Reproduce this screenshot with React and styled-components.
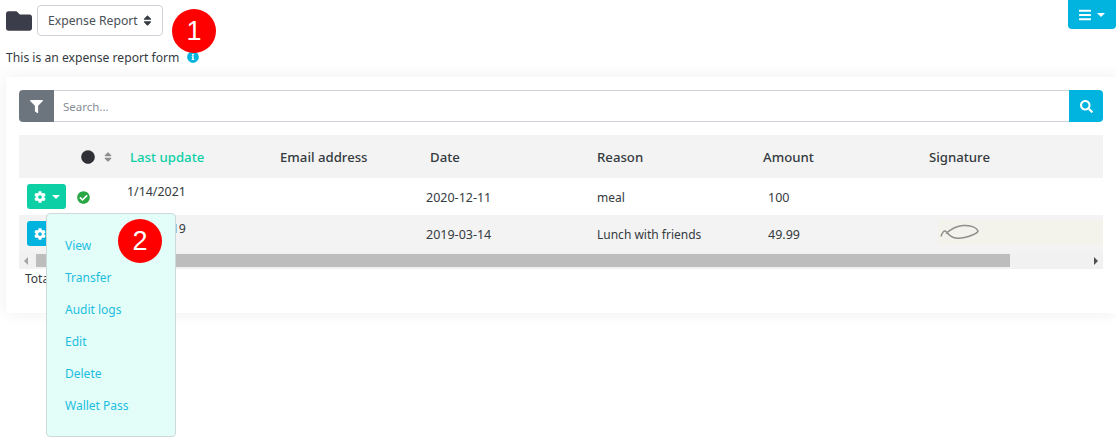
import styled, { createGlobalStyle } from "styled-components";
import { FaBars, FaCheckCircle, FaCircle, FaCog, FaFilter, FaFolder, FaInfoCircle, FaSearch, FaSort } from "react-icons/fa";

const colors = {
  teal: "#0ccfa6",
  blue: "#00b4df",
  link: "#1dbde0",
  text: "#343a40",
  line: "#ced4da",
};

const headerColumns = "62px 49px 150px 150px 167px 166px 166px 1fr";
const rowColumns = "58px 50px 153px 146px 171px 171px 170px 1fr";

const GlobalStyle = createGlobalStyle`
  html, body {
    margin: 0;
    background: #ffffff;
  }
  body {
    font-family: "Noto Sans", "Open Sans", sans-serif;
    font-size: 12px;
    color: ${colors.text};
  }
`;

const Page = styled.div`
  position: relative;
  width: 1116px;
  height: 444px;
  padding: 5px 0 0 6px;
  box-sizing: border-box;
  overflow: hidden;
`;

const TopBar = styled.div`
  display: flex;
  align-items: center;
  gap: 5px;
  height: 31px;
`;

const FolderIcon = styled(FaFolder)`
  width: 26px;
  height: 26px;
  color: #3c3d4a;
`;

const SelectButton = styled.button`
  display: flex;
  align-items: center;
  justify-content: space-between;
  width: 126px;
  height: 31px;
  padding: 0 10px;
  box-sizing: border-box;
  background: #ffffff;
  border: 1px solid ${colors.line};
  border-radius: 4px;
  font: inherit;
  font-size: 12.2px;
  color: #495057;
  svg {
    width: 9px;
    height: 13px;
    color: #343a40;
  }
`;

const Description = styled.p`
  display: flex;
  align-items: center;
  gap: 8px;
  height: 18px;
  margin: 12px 0 0;
  font-size: 12.15px;
  svg {
    width: 12px;
    height: 12px;
    color: ${colors.blue};
  }
`;

const MenuButton = styled.button`
  position: absolute;
  top: 0;
  right: 0;
  display: flex;
  align-items: center;
  justify-content: center;
  gap: 6px;
  width: 48px;
  height: 29px;
  padding: 0;
  border: 0;
  border-radius: 0 0 4px 4px;
  background: ${colors.blue};
  color: #ffffff;
  svg {
    width: 12px;
    height: 14px;
  }
`;

const Caret = styled.span`
  width: 0;
  height: 0;
  border-left: 4px solid transparent;
  border-right: 4px solid transparent;
  border-top: 4px solid #ffffff;
`;

const Card = styled.section`
  margin-top: 11px;
  height: 236px;
  padding: 13px 13px 0;
  box-sizing: border-box;
  background: #ffffff;
  box-shadow: 0 0 16px rgba(0, 0, 0, 0.07);
`;

const SearchRow = styled.div`
  display: flex;
  height: 32px;
  margin-bottom: 13px;
`;

const FilterAddon = styled.div`
  display: flex;
  align-items: center;
  justify-content: center;
  width: 35px;
  background: #6c757d;
  border-radius: 4px 0 0 4px;
  color: #ffffff;
  svg {
    width: 13px;
    height: 13px;
  }
`;

const SearchInput = styled.input`
  flex: 1;
  min-width: 0;
  height: 32px;
  padding: 0 9px;
  box-sizing: border-box;
  border: 1px solid ${colors.line};
  border-left: 0;
  border-right: 0;
  font: inherit;
  font-size: 11.5px;
  outline: none;
  &::placeholder {
    color: #868e96;
    opacity: 1;
  }
`;

const SearchButton = styled.button`
  display: flex;
  align-items: center;
  justify-content: center;
  width: 34px;
  padding: 0;
  border: 0;
  border-radius: 0 4px 4px 0;
  background: ${colors.blue};
  color: #ffffff;
  svg {
    width: 13px;
    height: 13px;
  }
`;

const HeaderRow = styled.div`
  display: grid;
  grid-template-columns: ${headerColumns};
  align-items: center;
  height: 43px;
  padding-top: 1px;
  box-sizing: border-box;
  background: #f3f3f3;
  font-size: 13.2px;
  font-weight: 500;
  color: #343a40;
`;

const HeaderCell = styled.span`
  color: ${({ $active }) => ($active ? colors.teal : "inherit")};
`;

const StatusHead = styled.span`
  display: flex;
  align-items: center;
  gap: 9px;
  svg:first-child {
    width: 14px;
    height: 14px;
    color: #2f3036;
  }
  svg:last-child {
    width: 8px;
    height: 12px;
    color: #8d8d8d;
  }
`;

const Row = styled.div`
  display: grid;
  grid-template-columns: ${rowColumns};
  height: 37px;
  background: ${({ $striped }) => ($striped ? "#f3f3f3" : "#ffffff")};
`;

const ActionCell = styled.div`
  display: flex;
  align-items: center;
  padding-left: 8px;
`;

const ActionButton = styled.button`
  display: flex;
  align-items: center;
  gap: 6px;
  width: 39px;
  height: 25px;
  padding: 0 0 0 7px;
  box-sizing: border-box;
  border: 0;
  border-radius: 3px;
  background: ${({ $tone }) => ($tone === "teal" ? colors.teal : colors.blue)};
  color: #ffffff;
  svg {
    width: 12px;
    height: 12px;
  }
`;

const StatusCell = styled.div`
  display: flex;
  align-items: center;
  padding-top: 2px;
  svg {
    width: 13px;
    height: 13px;
    color: #28a745;
  }
`;

const UpdatedCell = styled.div`
  padding-top: 5px;
  font-size: 12.4px;
  line-height: 18px;
`;

const Cell = styled.div`
  display: flex;
  align-items: center;
  padding-top: 1px;
  font-size: ${({ $numeric }) => ($numeric ? "12.5px" : "12px")};
`;

const SignatureCell = styled.div`
  display: flex;
  align-items: center;
  height: 25px;
  margin-top: 5px;
  background: #f3f3ec;
  svg {
    width: 42px;
    height: 20px;
  }
`;

const ScrollBar = styled.div`
  display: flex;
  align-items: center;
  height: 17px;
  background: #f1f1f1;
`;

const ScrollArrow = styled.span`
  width: 0;
  height: 0;
  margin: 0 5px;
  border-top: 4px solid transparent;
  border-bottom: 4px solid transparent;
  border-left: ${({ $right }) => ($right ? "4px solid #505050" : "0")};
  border-right: ${({ $right }) => ($right ? "0" : "4px solid #a3a3a3")};
`;

const ScrollThumb = styled.div`
  width: 974px;
  height: 13px;
  margin-left: 3px;
  background: #bdbdbd;
`;

const ScrollSpace = styled.div`
  flex: 1;
`;

const Total = styled.div`
  padding: 0 0 0 6px;
  margin-top: 1px;
  line-height: 18px;
`;

const Dropdown = styled.ul`
  position: absolute;
  left: 46px;
  top: 213px;
  width: 130px;
  height: 224px;
  margin: 0;
  padding: 16px 0 0;
  box-sizing: border-box;
  list-style: none;
  background: #e3fdf9;
  border: 1px solid #ced9d8;
  border-radius: 4px;
`;

const DropdownItem = styled.li`
  height: 32px;
  padding-left: 18px;
  line-height: 32px;
  color: ${colors.link};
`;

const Marker = styled.span`
  position: absolute;
  left: ${({ $x }) => $x}px;
  top: ${({ $y }) => $y}px;
  display: flex;
  align-items: center;
  justify-content: center;
  width: 44px;
  height: 44px;
  border-radius: 50%;
  background: #fe0000;
  color: #ffffff;
  font-family: "Liberation Sans", Arial, sans-serif;
  font-size: 27px;
`;

const menuItems = ["View", "Transfer", "Audit logs", "Edit", "Delete", "Wallet Pass"];

function RowActions({ tone }) {
  return (
    <ActionCell>
      <ActionButton $tone={tone}>
        <FaCog />
        <Caret />
      </ActionButton>
    </ActionCell>
  );
}

function App() {
  return (
    <Page>
      <GlobalStyle />
      <TopBar>
        <FolderIcon />
        <SelectButton>
          Expense Report
          <FaSort />
        </SelectButton>
      </TopBar>
      <Description>
        This is an expense report form
        <FaInfoCircle />
      </Description>
      <MenuButton>
        <FaBars />
        <Caret />
      </MenuButton>

      <Card>
        <SearchRow>
          <FilterAddon>
            <FaFilter />
          </FilterAddon>
          <SearchInput placeholder="Search..." />
          <SearchButton>
            <FaSearch />
          </SearchButton>
        </SearchRow>

        <HeaderRow>
          <span />
          <StatusHead>
            <FaCircle />
            <FaSort />
          </StatusHead>
          <HeaderCell $active>Last update</HeaderCell>
          <HeaderCell>Email address</HeaderCell>
          <HeaderCell>Date</HeaderCell>
          <HeaderCell>Reason</HeaderCell>
          <HeaderCell>Amount</HeaderCell>
          <HeaderCell>Signature</HeaderCell>
        </HeaderRow>

        <Row>
          <RowActions tone="teal" />
          <StatusCell>
            <FaCheckCircle />
          </StatusCell>
          <UpdatedCell>1/14/2021</UpdatedCell>
          <Cell />
          <Cell $numeric>2020-12-11</Cell>
          <Cell>meal</Cell>
          <Cell $numeric>100</Cell>
          <Cell />
        </Row>
        <Row $striped>
          <RowActions tone="blue" />
          <StatusCell />
          <UpdatedCell>3/14/2019</UpdatedCell>
          <Cell />
          <Cell $numeric>2019-03-14</Cell>
          <Cell>Lunch with friends</Cell>
          <Cell $numeric>49.99</Cell>
          <SignatureCell>
            <svg viewBox="0 0 42 20" fill="none">
              <path
                d="M3 13.5C4 10 6 7 8 8.5C10 11 13 14.5 18 15C25 16 37 12 40 8.5C39 4 31 2 25 2.5C18 3 12 7 8 10.5"
                stroke="#8f8f89"
                strokeWidth="1.5"
              />
            </svg>
          </SignatureCell>
        </Row>

        <ScrollBar>
          <ScrollArrow />
          <ScrollThumb />
          <ScrollSpace />
          <ScrollArrow $right />
        </ScrollBar>
        <Total>Total: 2</Total>
      </Card>

      <Dropdown>
        {menuItems.map((item) => (
          <DropdownItem key={item}>{item}</DropdownItem>
        ))}
      </Dropdown>

      <Marker $x={172} $y={9}>1</Marker>
      <Marker $x={118} $y={219}>2</Marker>
    </Page>
  );
}

export default App;
